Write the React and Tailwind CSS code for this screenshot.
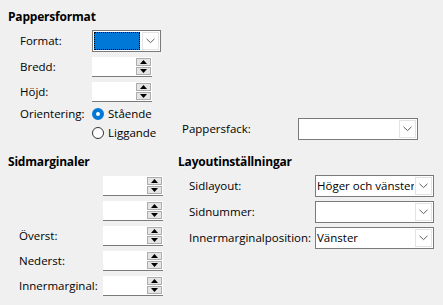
import React from 'react'

const font = { fontFamily: '"Segoe UI", "Open Sans", "Noto Sans", sans-serif' }

function Chevron() {
  return (
    <svg width="9" height="6" viewBox="0 0 9 6" className="block">
      <path d="M0.5 0.8 L4.5 4.6 L8.5 0.8" fill="none" stroke="#606060" strokeWidth="1" />
    </svg>
  )
}

function Combo({ w, value, focused }) {
  return (
    <div className={`flex h-[22px] ${w} border border-[#7a7a7a] bg-white`}>
      {focused ? (
        <div className="flex-1 m-px bg-[#0078d7] outline-1 outline-dotted outline-black -outline-offset-1" />
      ) : (
        <div className="flex-1 pl-px leading-[20px] text-[11.5px] whitespace-nowrap overflow-hidden">{value}</div>
      )}
      <div className="w-[17px] m-px flex items-center justify-center border border-[#e3e3e3] bg-white">
        <Chevron />
      </div>
    </div>
  )
}

function Arrow({ up }) {
  return (
    <svg width="7" height="4" viewBox="0 0 7 4" className="block">
      {up ? <path d="M3.5 0 L7 4 L0 4 Z" fill="#000" /> : <path d="M0 0 L7 0 L3.5 4 Z" fill="#000" />}
    </svg>
  )
}

function Spin() {
  return (
    <div className="flex h-[20px] w-[60px] bg-white border-b border-[#7a7a7a]">
      <div className="flex-1" />
      <div className="w-[15px] flex flex-col gap-px py-px mr-px">
        <div className="flex-1 flex items-center justify-center bg-[#e5e5e5] border border-[#adadad]"><Arrow up /></div>
        <div className="flex-1 flex items-center justify-center bg-[#e5e5e5] border border-[#adadad]"><Arrow /></div>
      </div>
    </div>
  )
}

function Radio({ checked, label }) {
  return (
    <div className="flex items-center h-[16px]">
      {checked ? (
        <div className="w-[12px] h-[12px] rounded-full border-[4px] border-[#0078d7] bg-white" />
      ) : (
        <div className="w-[12px] h-[12px] rounded-full border border-[#333] bg-white" />
      )}
      <span className="ml-[4px] text-[11.5px]">{label}</span>
    </div>
  )
}

const Label = ({ w, children }) => <span className={`${w} text-[11.5px] whitespace-nowrap`}>{children}</span>
const Heading = ({ children }) => <div className="h-[16px] leading-[16px] text-[12px] font-bold tracking-[-0.2px]">{children}</div>

export default function App() {
  return (
    <div style={font} className="w-[443px] h-[305px] bg-[#f0f0f0] text-black overflow-hidden">
      {/* Pappersformat */}
      <div className="pl-[8px] pt-[9px]">
        <Heading>Pappersformat</Heading>
        <div className="pl-[12px]">
          <div className="mt-[5px] flex items-center h-[22px]">
            <Label w="w-[72px]">Format:</Label>
            <Combo w="w-[69px]" focused />
          </div>
          <div className="mt-[5px] flex items-center h-[20px]">
            <Label w="w-[72px]">Bredd:</Label>
            <Spin />
          </div>
          <div className="mt-[5px] flex items-center h-[20px]">
            <Label w="w-[72px]">Höjd:</Label>
            <Spin />
          </div>
          <div className="mt-[4px] flex">
            <span className="w-[72px] h-[16px] leading-[16px] text-[11.5px]">Orientering:</span>
            <div className="w-[90px] flex flex-col gap-[3px]">
              <Radio checked label="Stående" />
              <Radio label="Liggande" />
            </div>
            <div className="mt-[12px] flex items-center h-[22px]">
              <Label w="w-[116px]">Pappersfack:</Label>
              <Combo w="w-[120px]" />
            </div>
          </div>
        </div>
      </div>

      {/* Bottom sections */}
      <div className="flex mt-[13px] pl-[8px]">
        <div className="w-[170px]">
          <Heading>Sidmarginaler</Heading>
          <div className="mt-[6px] pl-[11px] flex flex-col gap-[5px]">
            {['', '', 'Överst:', 'Nederst:', 'Innermarginal:'].map((l, i) => (
              <div key={i} className="flex items-center h-[20px]">
                <Label w="w-[84px]">{l}</Label>
                <Spin />
              </div>
            ))}
          </div>
        </div>
        <div className="flex-1">
          <Heading>Layoutinställningar</Heading>
          <div className="mt-[5px] pl-[11px] flex flex-col gap-[4px]">
            {[['Sidlayout:', 'Höger och vänster'], ['Sidnummer:', ''], ['Innermarginalposition:', 'Vänster']].map(([l, v]) => (
              <div key={l} className="flex items-center h-[22px]">
                <Label w="w-[126px]">{l}</Label>
                <Combo w="w-[119px]" value={v} />
              </div>
            ))}
          </div>
        </div>
      </div>
    </div>
  )
}
